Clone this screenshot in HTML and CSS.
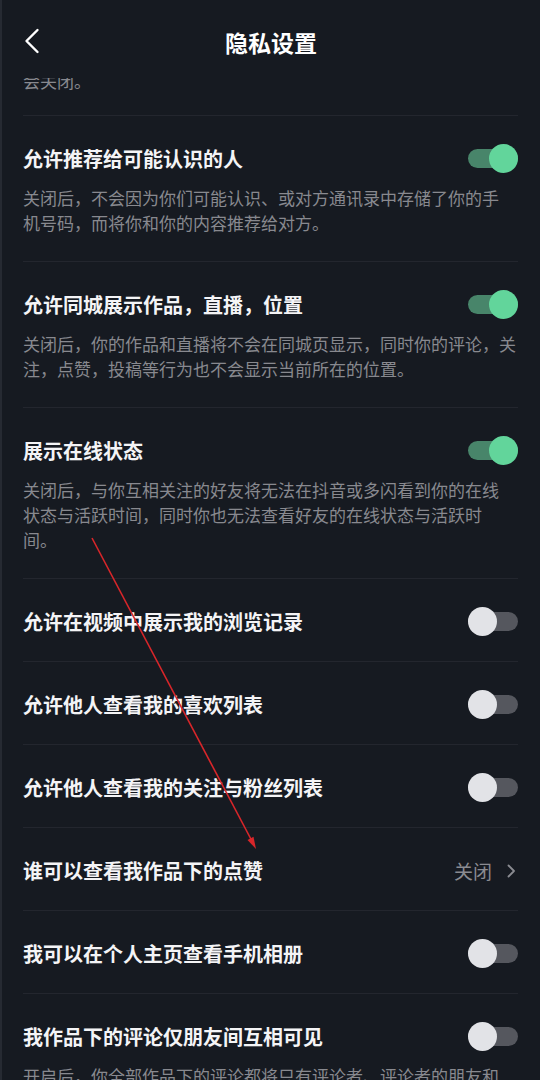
FILE: index.html
```html
<!DOCTYPE html>
<html lang="zh-CN">
<head>
    <meta charset="UTF-8">
    <meta name="viewport" content="width=device-width, initial-scale=1.0">
    <title>隐私设置</title>
    <link rel="stylesheet" href="styles.css">
</head>
<body>
    <div class="pagina">
        <header class="barra">
            <button class="volver" aria-label="返回">
                <svg width="16" height="26" viewBox="0 0 16 26">
                    <path d="M13.5 2 L2.5 13 L13.5 24" fill="none" stroke="#ffffff" stroke-width="2.4" stroke-linecap="round" stroke-linejoin="round"/>
                </svg>
            </button>
            <h1>隐私设置</h1>
        </header>

        <!-- el texto anterior queda cortado bajo la barra -->
        <div class="recorte">
            <p class="nota">会关闭。</p>
        </div>

        <ul class="ajustes">
            <li class="ajuste">
                <div class="fila">
                    <span class="titulo">允许推荐给可能认识的人</span>
                    <span class="interruptor activo"></span>
                </div>
                <p class="nota">关闭后，不会因为你们可能认识、或对方通讯录中存储了你的手<br>机号码，而将你和你的内容推荐给对方。</p>
            </li>
            <li class="ajuste">
                <div class="fila">
                    <span class="titulo">允许同城展示作品，直播，位置</span>
                    <span class="interruptor activo"></span>
                </div>
                <p class="nota">关闭后，你的作品和直播将不会在同城页显示，同时你的评论，关<br>注，点赞，投稿等行为也不会显示当前所在的位置。</p>
            </li>
            <li class="ajuste">
                <div class="fila">
                    <span class="titulo">展示在线状态</span>
                    <span class="interruptor activo"></span>
                </div>
                <p class="nota">关闭后，与你互相关注的好友将无法在抖音或多闪看到你的在线<br>状态与活跃时间，同时你也无法查看好友的在线状态与活跃时<br>间。</p>
            </li>
            <li class="ajuste">
                <div class="fila">
                    <span class="titulo">允许在视频中展示我的浏览记录</span>
                    <span class="interruptor"></span>
                </div>
            </li>
            <li class="ajuste">
                <div class="fila">
                    <span class="titulo">允许他人查看我的喜欢列表</span>
                    <span class="interruptor"></span>
                </div>
            </li>
            <li class="ajuste">
                <div class="fila">
                    <span class="titulo">允许他人查看我的关注与粉丝列表</span>
                    <span class="interruptor"></span>
                </div>
            </li>
            <li class="ajuste">
                <div class="fila">
                    <span class="titulo">谁可以查看我作品下的点赞</span>
                    <span class="valor">关闭
                        <svg width="10" height="16" viewBox="0 0 10 16">
                            <path d="M2.5 2.5 L8 8 L2.5 13.5" fill="none" stroke="#8a8b91" stroke-width="1.8" stroke-linecap="round" stroke-linejoin="round"/>
                        </svg>
                    </span>
                </div>
            </li>
            <li class="ajuste">
                <div class="fila">
                    <span class="titulo">我可以在个人主页查看手机相册</span>
                    <span class="interruptor"></span>
                </div>
            </li>
            <li class="ajuste">
                <div class="fila">
                    <span class="titulo">我作品下的评论仅朋友间互相可见</span>
                    <span class="interruptor"></span>
                </div>
                <p class="nota">开启后，你全部作品下的评论都将只有评论者、评论者的朋友和</p>
            </li>
        </ul>

        <!-- flecha roja dibujada encima -->
        <svg class="flecha" width="540" height="1080" viewBox="0 0 540 1080">
            <line x1="92" y1="538" x2="253" y2="843" stroke="#d8262a" stroke-width="1.6"/>
            <path d="M256 849 L247.5 840 L253.5 836.8 Z" fill="#d8262a"/>
        </svg>
    </div>
</body>
</html>
```

FILE: styles.css
```css
body {
    margin: 0;
    background-color: #161a21;
    font-family: "Noto Sans CJK SC", "Noto Sans", sans-serif;
    color: #f2f2f4;
    overflow: hidden;
}
.pagina {
    position: relative;
    width: 540px;
    height: 1080px;
    overflow: hidden;
    box-sizing: border-box;
    border-left: 2px solid #262a32;
}
.barra {
    position: relative;
    height: 78px;
    box-sizing: border-box;
    padding-top: 27px;
}
.barra h1 {
    margin: 0;
    font-size: 23px;
    line-height: 30px;
    font-weight: bold;
    text-align: center;
    color: #ffffff;
}
.volver {
    position: absolute;
    left: 22px;
    top: 28px;
    padding: 0;
    border: none;
    background: none;
}
.recorte {
    height: 37px;
    overflow: hidden;
    padding: 0 22px 0 21px;
}
.recorte .nota {
    margin-top: -10px;
}
.ajustes {
    list-style: none;
    margin: 0;
    padding: 0 22px 0 21px;
}
.ajuste {
    border-top: 1px solid #23262e;
    padding: 29px 0 26px;
}
.fila {
    display: flex;
    align-items: center;
    justify-content: space-between;
    height: 27px;
}
.titulo {
    font-size: 20px;
    line-height: 27px;
    font-weight: bold;
    color: #f4f4f6;
}
.nota {
    margin: 13px 0 0;
    font-size: 17px;
    line-height: 25px;
    color: #88898f;
    white-space: nowrap;
}
.valor {
    display: flex;
    align-items: center;
    gap: 14px;
    font-size: 19px;
    color: #8a8b91;
    margin-right: 2px;
}
.interruptor {
    position: relative;
    width: 50px;
    height: 19px;
    border-radius: 10px;
    background-color: #55575e;
}
.interruptor::after {
    content: "";
    position: absolute;
    left: 0;
    top: -5px;
    width: 29px;
    height: 29px;
    border-radius: 50%;
    background-color: #e2e3e7;
}
.interruptor.activo {
    background-color: #48856a;
}
.interruptor.activo::after {
    left: auto;
    right: 0;
    background-color: #62d59b;
}
.flecha {
    position: absolute;
    left: -2px;
    top: 0;
    pointer-events: none;
}
```
